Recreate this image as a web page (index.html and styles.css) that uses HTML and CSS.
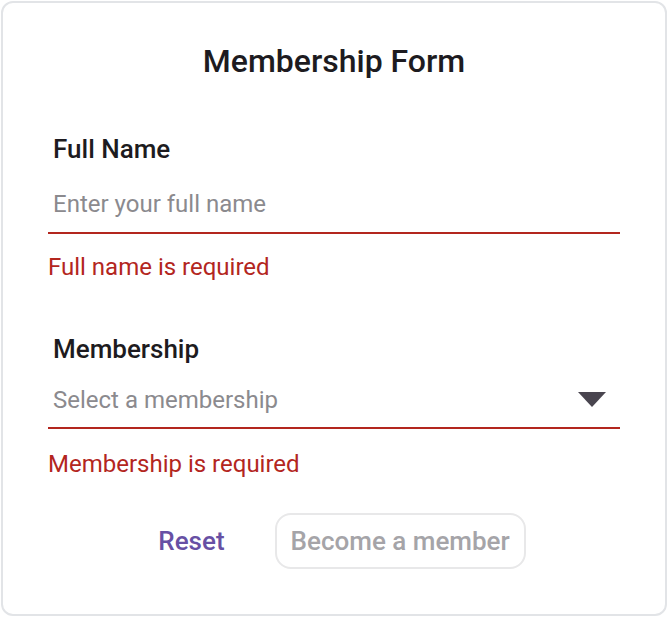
FILE: index.html
```html
<!DOCTYPE html>
<html>
    <head lang="en">
        <meta charset="UTF-8">
        <title>Membership Form</title>
        <link rel="stylesheet" href="styles.css">
    </head>
    <body>
    <form class="card">
        <h1 class="title">Membership Form</h1>

        <div class="field">
            <label class="label" for="fullname">Full Name</label>
            <input class="input" id="fullname" type="text" placeholder="Enter your full name">
            <p class="error">Full name is required</p>
        </div>

        <div class="field field-select">
            <label class="label" for="plan">Membership</label>
            <div class="select" id="plan">
                <span class="placeholder">Select a membership</span>
                <svg class="caret" width="28" height="16" viewBox="0 0 28 16">
                    <path d="M0 0 L28 0 L14 15 Z" fill="#49454f"/>
                </svg>
            </div>
            <p class="error">Membership is required</p>
        </div>

        <div class="actions">
            <button type="reset" class="btn-text">Reset</button>
            <button type="submit" class="btn-outline" disabled>Become a member</button>
        </div>
    </form>
    </body>
</html>
```

FILE: styles.css
```css
*{
    margin:0;
    padding:0;
    box-sizing:border-box;
}
body{
    background:#fff;
    font-family:Roboto, "Noto Sans", sans-serif;
    color:#1d1b20;
}
.card{
    margin:1px;
    height:615px;
    border:2px solid #e2e4e7;
    border-radius:12px;
    padding:38px 45px 0 45px;
    display:flex;
    flex-direction:column;
}
.title{
    font-size:32px;
    font-weight:500;
    text-align:center;
    line-height:40px;
    margin-bottom:52px;
}
.field{
    display:flex;
    flex-direction:column;
    margin-bottom:50px;
}
.label{
    font-size:26px;
    font-weight:500;
    line-height:32px;
    padding-left:5px;
    margin-bottom:11px;
}
.input,
.select{
    height:58px;
    border:none;
    border-bottom:2px solid #b3261e;
    padding:0 5px;
    font-family:inherit;
    font-size:24px;
    outline:none;
    background:transparent;
}
.input::placeholder,
.placeholder{
    color:#8b8a8e;
}
.select{
    display:flex;
    align-items:center;
    justify-content:space-between;
    padding-right:14px;
}
.error{
    color:#b3261e;
    font-size:24px;
    line-height:32px;
    margin-top:17px;
}
.field-select{
    margin-bottom:33px;
}
.field-select .label{
    margin-bottom:8px;
}
.field-select .select{
    height:56px;
}
.field-select .error{
    margin-top:19px;
}
.actions{
    display:flex;
    justify-content:center;
    align-items:center;
    gap:34px;
}
.btn-text{
    border:none;
    background:none;
    font-family:inherit;
    font-size:26px;
    font-weight:500;
    color:#6750a4;
    padding:0 16px;
}
.btn-outline{
    height:56px;
    padding:0 14px;
    border:2px solid #e8e8e9;
    border-radius:16px;
    background:#fff;
    font-family:inherit;
    font-size:26px;
    font-weight:500;
    color:#a5a4a8;
}
```
